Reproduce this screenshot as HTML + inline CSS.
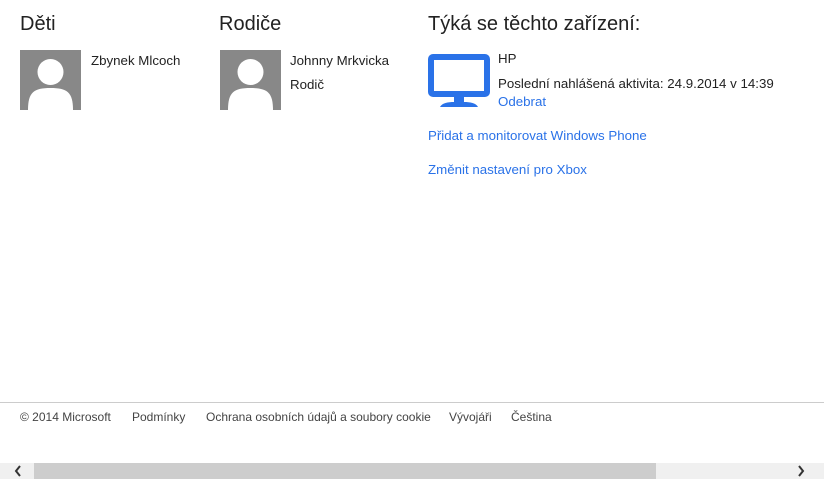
<!DOCTYPE html>
<html><head><meta charset="utf-8"><style>
body{margin:0;width:824px;height:479px;position:relative;overflow:hidden;background:#fff;font-family:"Liberation Sans",sans-serif;color:#222}
.a{position:absolute;white-space:nowrap}
h{position:absolute;font-size:20px;font-weight:normal;color:#222}
.t{font-size:13.3px}
.l{color:#2a72e8;font-size:13.3px}
.f{font-size:12px;color:#444}
.av{position:absolute;width:61px;height:60px;background:#888;overflow:hidden}
</style></head><body>
<h class="a" style="left:20px;top:13px">Děti</h>
<h class="a" style="left:219px;top:13px">Rodiče</h>
<h class="a" style="left:428px;top:13px">Týká se těchto zařízení:</h>
<div class="av" style="left:20px;top:50px"><svg width="61" height="60"><circle cx="30.5" cy="22" r="13" fill="#fff"/><path d="M8 60 C8 42 14 38 30.5 38 C47 38 53 42 53 60Z" fill="#fff"/></svg></div>
<div class="av" style="left:220px;top:50px"><svg width="61" height="60"><circle cx="30.5" cy="22" r="13" fill="#fff"/><path d="M8 60 C8 42 14 38 30.5 38 C47 38 53 42 53 60Z" fill="#fff"/></svg></div>
<div class="a t" style="left:91px;top:53px">Zbynek Mlcoch</div>
<div class="a t" style="left:290px;top:53px">Johnny Mrkvicka</div>
<div class="a t" style="left:290px;top:77px">Rodič</div>
<svg class="a" style="left:428px;top:54px" width="62" height="56"><rect x="3" y="3" width="56" height="37" rx="2" fill="none" stroke="#2a72e8" stroke-width="6"/><path d="M26 42h10v6c6 0 12 1 14 5H12c2-4 8-5 14-5z" fill="#2a72e8"/></svg>
<div class="a t" style="left:498px;top:51px">HP</div>
<div class="a t" style="left:498px;top:76px">Poslední nahlášená aktivita: 24.9.2014 v 14:39</div>
<div class="a l" style="left:498px;top:94px">Odebrat</div>
<div class="a l" style="left:428px;top:128px">Přidat a monitorovat Windows Phone</div>
<div class="a l" style="left:428px;top:162px">Změnit nastavení pro Xbox</div>
<div class="a" style="left:0;top:402px;width:824px;height:1px;background:#ccc"></div>
<div class="a f" style="left:20px;top:410px">© 2014 Microsoft</div>
<div class="a f" style="left:132px;top:410px">Podmínky</div>
<div class="a f" style="left:206px;top:410px">Ochrana osobních údajů a soubory cookie</div>
<div class="a f" style="left:449px;top:410px">Vývojáři</div>
<div class="a f" style="left:511px;top:410px">Čeština</div>
<div class="a" style="left:0;top:463px;width:824px;height:16px;background:#f0f0f0"></div>
<div class="a" style="left:34px;top:463px;width:622px;height:16px;background:#cdcdcd"></div>
<svg class="a" style="left:13px;top:464px" width="10" height="14"><path d="M7 2L3 7l4 5" fill="none" stroke="#333" stroke-width="2"/></svg>
<svg class="a" style="left:796px;top:464px" width="10" height="14"><path d="M3 2l4 5-4 5" fill="none" stroke="#333" stroke-width="2"/></svg>
</body></html>
